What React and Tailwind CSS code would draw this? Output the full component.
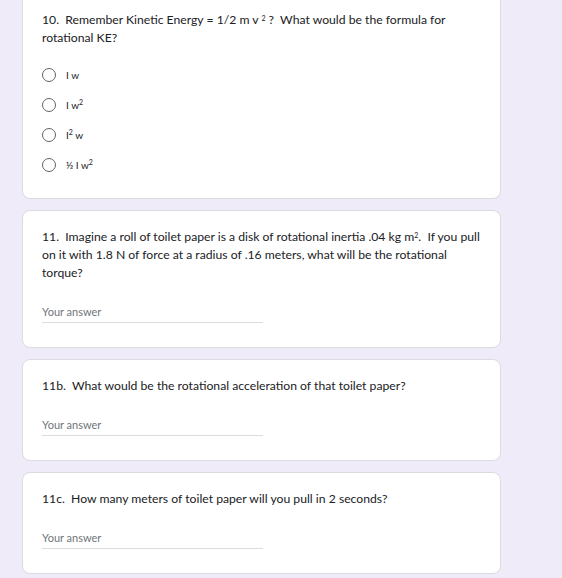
const font = { fontFamily: 'Lato, "Open Sans", Arial, sans-serif' }

function Card({ children, first = false }) {
  return (
    <div
      className={`bg-white border border-[#dadce0] ${
        first ? 'rounded-b-lg border-t-0 pt-[11px] pb-[18px]' : 'rounded-lg pt-[17px] pb-[24px]'
      } pl-[19px] pr-[16px]`}
    >
      {children}
    </div>
  )
}

function Radio({ label }) {
  return (
    <div className="flex items-center h-[30px] gap-[10px]">
      <span className="w-[14px] h-[14px] rounded-full border-[1.5px] border-[#5f6368] shrink-0" />
      <span className="text-[10px] text-[#202124]">{label}</span>
    </div>
  )
}

function Answer() {
  return (
    <div className="mt-[22px] w-[221px] border-b border-[#dadce0] pb-[2px]">
      <span className="block text-[11px] leading-[16px] text-[#70757a]">Your answer</span>
    </div>
  )
}

function Question({ children }) {
  return <p className="text-[12.2px] leading-[18px] text-[#202124]">{children}</p>
}

export default function App() {
  return (
    <div className="min-h-[578px] w-[562px] bg-[#f0ebf8] overflow-hidden" style={font}>
      <div className="ml-[22px] w-[479px] flex flex-col gap-[11px] pb-[5px]">
        <Card first>
          <Question>
            10.&nbsp; Remember Kinetic Energy = 1/2 m v <sup className="text-[7px]">2</sup> ?&nbsp; What would be the
            formula for rotational KE?
          </Question>
          <div className="mt-[13px]">
            <Radio label="I w" />
            <Radio label={<>I w<sup className="text-[7px]">2</sup></>} />
            <Radio label={<>I<sup className="text-[7px]">2</sup> w</>} />
            <Radio label={<>½ I w<sup className="text-[7px]">2</sup></>} />
          </div>
        </Card>

        <Card>
          <Question>
            11.&nbsp; Imagine a roll of toilet paper is a disk of rotational inertia .04 kg m<sup className="text-[7px]">2</sup>.&nbsp; If
            you pull on it with 1.8 N of force at a radius of .16 meters, what will be the rotational torque?
          </Question>
          <Answer />
        </Card>

        <Card>
          <Question>11b.&nbsp; What would be the rotational acceleration of that toilet paper?</Question>
          <Answer />
        </Card>

        <Card>
          <Question>11c.&nbsp; How many meters of toilet paper will you pull in 2 seconds?</Question>
          <Answer />
        </Card>
      </div>
    </div>
  )
}
